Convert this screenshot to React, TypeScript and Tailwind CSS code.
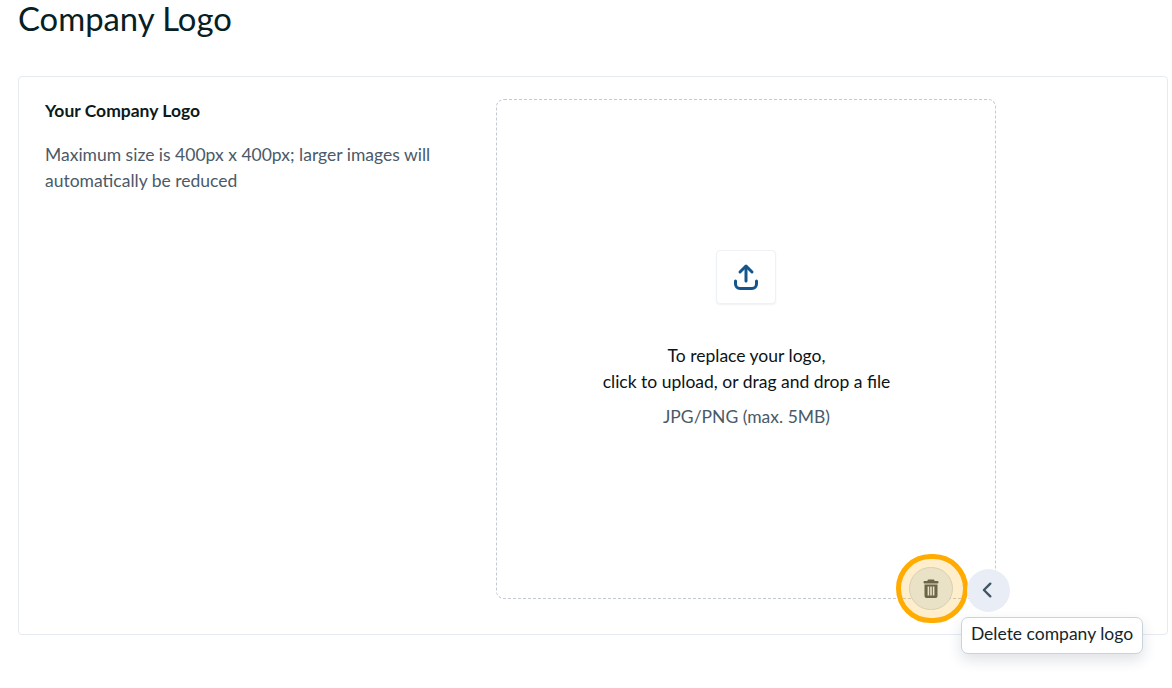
export default function App() {
  return (
    <div className="h-[688px] w-[1172px] overflow-hidden bg-white pl-[18px] pr-[4px] font-['Lato',sans-serif] text-[#0d1f22]">
      <h1 className="h-[76px] text-[32.8px] leading-[38px] font-normal text-[#062024]">Company Logo</h1>
      <div className="flex h-[559px] rounded-[4px] border border-[#e6ebf2] pl-[26px] pt-[22px]">
        <div className="w-[451px]">
          <h2 className="text-[17.5px] leading-[24px] font-bold text-[#0a1a1d]">Your Company Logo</h2>
          <p className="mt-[19px] w-[400px] text-[17.5px] leading-[26px] text-[#4a5a68]">
            Maximum size is 400px x 400px; larger images will automatically be reduced
          </p>
        </div>
        <div className="relative h-[500px] w-[500px]">
          <div className="flex h-full w-full flex-col items-center rounded-[8px] border border-dashed border-[#c3cad3] pl-[1px] pt-[150px]">
            <div className="-ml-[1px] flex h-[54px] w-[60px] items-center justify-center rounded-[4px] border border-[#eef1f6] bg-white shadow-[0_1px_2px_rgba(16,40,80,0.06)]">
              <svg width="26" height="28" viewBox="0 0 26 28" fill="none" stroke="#14568c" strokeWidth="3" strokeLinecap="round" strokeLinejoin="round">
                <path d="M13 18V3.5" />
                <path d="M7 9L13 3L19 9" />
                <path d="M2.5 18v3a4.5 4.5 0 0 0 4.5 4.5h12a4.5 4.5 0 0 0 4.5-4.5v-3" />
              </svg>
            </div>
            <p className="mt-[39px] text-center text-[17.5px] leading-[26px] text-[#0b1417]">
              To replace your logo,
              <br />
              click to upload, or drag and drop a file
            </p>
            <p className="mt-[9px] text-center text-[17.5px] leading-[26px] text-[#4a5a68]">JPG/PNG (max. 5MB)</p>
          </div>
          <div className="absolute left-[400px] top-[455px] flex h-[69px] w-[72px] items-center justify-center rounded-full border-[5px] border-[#ffab00] bg-[#ffab00]/20 pr-[2px]">
            <div className="flex h-[43px] w-[44px] items-center justify-center rounded-full border border-[#d8d0b0] bg-[#eae2c6]">
              <svg width="18" height="20" viewBox="0 0 18 20" fill="#6b6648">
                <rect x="5.5" y="0.5" width="7" height="2.5" rx="1" />
                <rect x="1.5" y="2" width="15" height="2.5" rx="1" />
                <path fillRule="evenodd" d="M2.5 5.5h13V17a2 2 0 0 1-2 2h-9a2 2 0 0 1-2-2zM5.6 7.5v9h1.6v-9zM8.2 7.5v9h1.6v-9zM10.8 7.5v9h1.6v-9z" />
              </svg>
            </div>
          </div>
          <div className="absolute left-[471px] top-[470px] flex h-[43px] w-[43px] items-center justify-center rounded-full bg-[#e9eef6]">
            <svg width="14" height="18" viewBox="0 0 14 18" fill="none" stroke="#3f5566" strokeWidth="2.4" strokeLinecap="round" strokeLinejoin="round">
              <path d="M8.3 1.7L1.9 8l6.4 6.3" />
            </svg>
          </div>
          <div className="absolute left-[465px] top-[518px] flex h-[37px] w-[182px] items-center justify-center rounded-[7px] border border-[#c9d3de] bg-white pb-[2px] text-[17.5px] text-[#14262a] shadow-[0_6px_14px_rgba(30,50,80,0.14)] whitespace-nowrap">
            Delete company logo
          </div>
        </div>
      </div>
    </div>
  );
}
